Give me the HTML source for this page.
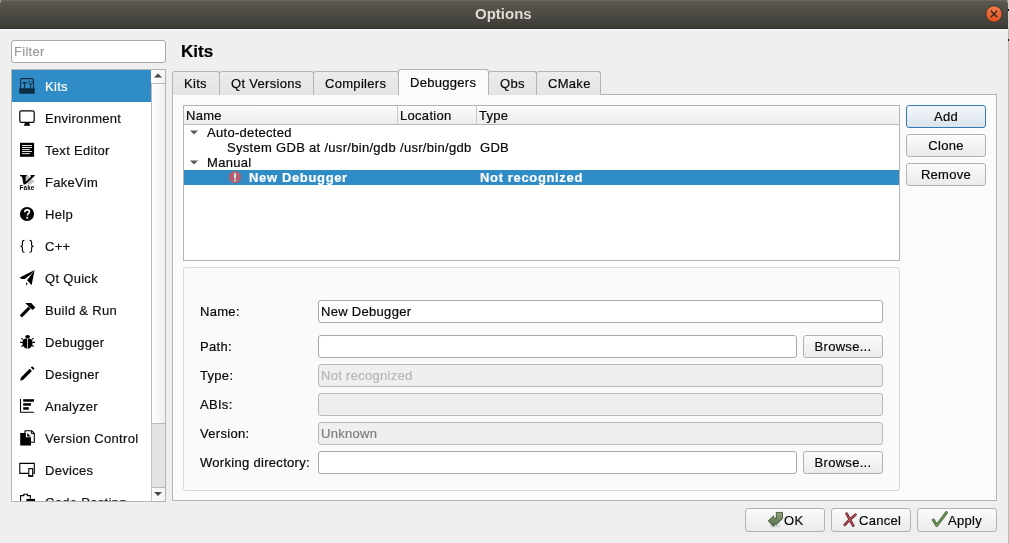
<!DOCTYPE html>
<html><head><meta charset="utf-8">
<style>
*{box-sizing:border-box}
html,body{margin:0;padding:0}
body{width:1009px;height:543px;position:relative;overflow:hidden;background:#efefef;font-family:"Liberation Sans",sans-serif;font-size:13px;color:#080808;letter-spacing:0.3px}
.a{position:absolute}
.t{position:absolute;will-change:transform;-webkit-text-stroke:0.2px currentColor;white-space:nowrap;line-height:15px;height:15px}
.btn{position:absolute;will-change:transform;-webkit-text-stroke:0.2px currentColor;border:1px solid #b2b2b2;border-radius:3px;background:linear-gradient(#fbfbfb,#ebebeb);text-align:center;line-height:20px;color:#080808}
.inp{position:absolute;border:1px solid #a9a9a9;border-radius:3px;background:#fff}
.dis{background:#efefef;border-color:#b9b9b9;color:#9a9a9a}
.tab{position:absolute;top:72px;height:23px;border:1px solid #b4b4b4;border-bottom:none;border-radius:3px 3px 0 0;background:linear-gradient(#ececec,#e4e4e4);line-height:22px;text-align:center}
.side{position:absolute;left:12px;width:139px;height:32px}
.side .ic{position:absolute;left:7px;top:8px;width:16px;height:16px}
.side .lb{position:absolute;left:33px;top:9px;line-height:15px;white-space:nowrap}
</style></head><body>

<!-- title bar -->
<div class="a" style="left:0;top:0;width:1008px;height:29px;background:linear-gradient(#5b5950,#3d3c37);border-radius:4px 4px 0 0;border-bottom:1px solid #2f2e2a"></div>
<div class="a" style="left:0;top:29px;width:1008px;height:1px;background:#fafafa"></div>
<div class="t" style="left:475px;top:6px;font-weight:bold;font-size:15px;color:#dfdbd2;letter-spacing:0;line-height:16px;-webkit-text-stroke:0">Options</div>
<!-- close button -->
<svg class="a" style="left:985px;top:5px" width="18" height="18" viewBox="0 0 18 18">
 <defs><linearGradient id="cg" x1="0" y1="0" x2="0" y2="1"><stop offset="0" stop-color="#f37a4c"/><stop offset="1" stop-color="#df5420"/></linearGradient></defs>
 <circle cx="9" cy="9" r="8.5" fill="#35332f"/>
 <circle cx="9" cy="9" r="7.7" fill="url(#cg)"/>
 <path d="M5.8 5.8 L12.2 12.2 M12.2 5.8 L5.8 12.2" stroke="#2b2520" stroke-width="1.3"/>
</svg>
<div class="a" style="left:1008px;top:0;width:1px;height:543px;background:#b9b9b9"></div>
<div class="a" style="left:1008px;top:0;width:1px;height:29px;background:#d2d2d2"></div>
<div class="a" style="left:1008px;top:9px;width:1px;height:2px;background:#111"></div>
<div class="a" style="left:1008px;top:39px;width:1px;height:2px;background:#111"></div>
<div class="a" style="left:0;top:0;width:1008px;height:1px;background:#6b695f;border-radius:4px 4px 0 0"></div>

<!-- filter -->
<div class="inp" style="left:11px;top:40px;width:155px;height:23px"></div>
<div class="t" style="left:14px;top:44px;color:#9b9b9b">Filter</div>

<!-- heading -->
<div class="t" style="left:181px;top:43px;font-weight:bold;font-size:17px;line-height:18px;height:18px;letter-spacing:0;color:#000">Kits</div>

<!-- sidebar list -->
<div class="a" style="left:11px;top:69px;width:155px;height:433px;border:1px solid #b4b4b4;background:#fff"></div>
<div class="a" style="left:0;top:0;width:1009px;height:501px;overflow:hidden">
<div class="a" style="left:12px;top:70px;width:139px;height:32px;background:#308cc6"></div>
<svg class="a" style="left:15px;top:74px" width="24" height="24" viewBox="0 0 24 24"><path d="M5.6 14.3V6.2Q5.6 4.6 7.2 4.6H16.9Q18.5 4.6 18.5 6.2V14.3" fill="none" stroke="#0e2c42" stroke-width="1.1"/>
<rect x="4.3" y="14.2" width="15.4" height="5.5" fill="#0e2c42"/>
<path d="M7 9.4L7.8 8H11.8V9.6Z" fill="#0e2c42"/><rect x="9.1" y="9.3" width="1.1" height="5" fill="#0e2c42"/>
<path d="M14 6.9V8.9Q14 10.5 15.55 10.5Q17.1 10.5 17.1 8.9V6.9" fill="none" stroke="#0e2c42" stroke-width="0.95"/><rect x="15" y="10.2" width="1.05" height="4.1" fill="#0e2c42"/></svg>
<div class="t" style="left:45px;top:79px;color:#fff">Kits</div>
<svg class="a" style="left:15px;top:106px" width="24" height="24" viewBox="0 0 24 24"><rect x="4.8" y="4.8" width="14.4" height="11.6" rx="1.6" fill="none" stroke="#000" stroke-width="1.2"/>
<path d="M10 17H14.1L15.3 19.7H8.8Z" fill="#000"/></svg>
<div class="t" style="left:45px;top:111px;color:#111">Environment</div>
<svg class="a" style="left:15px;top:138px" width="24" height="24" viewBox="0 0 24 24"><rect x="5" y="4.8" width="14.1" height="14" fill="#000"/>
<g fill="#fff"><rect x="6.9" y="7" width="10.1" height="0.9"/><rect x="6.9" y="9.1" width="10.1" height="0.9"/><rect x="6.9" y="11.2" width="8.1" height="0.9"/><rect x="6.9" y="13.1" width="10.1" height="0.9"/><rect x="6.9" y="15.2" width="8.1" height="0.9"/></g></svg>
<div class="t" style="left:45px;top:143px;color:#111">Text Editor</div>
<svg class="a" style="left:15px;top:170px" width="24" height="24" viewBox="0 0 24 24"><path d="M11.8 4.3L19.7 11.5L14.2 15.3L9.2 10.5Z" fill="#c2c2c2"/>
<path d="M5 5.1H11.6V6.3L10.6 6.6L10.7 11.8L16.2 6.6L15.6 6.2V5.1H19.7V6.1L19 6.5L10.3 14.6H8.6L6.9 6.6L5 6.3Z" fill="#000"/>
<text x="12" y="19.7" text-anchor="middle" font-family="Liberation Sans" font-weight="bold" font-size="6.4" letter-spacing="0.1" fill="#000">Fake</text></svg>
<div class="t" style="left:45px;top:175px;color:#111">FakeVim</div>
<svg class="a" style="left:15px;top:202px" width="24" height="24" viewBox="0 0 24 24"><circle cx="12" cy="12" r="7.1" fill="#000"/>
<path d="M9.8 10.2Q9.8 7.9 12.1 7.9Q14.4 7.9 14.4 9.9Q14.4 11.1 13 11.8Q12.4 12.2 12.4 13.4" fill="none" stroke="#fff" stroke-width="1.6"/>
<rect x="11.3" y="14.8" width="1.8" height="1.8" fill="#fff"/></svg>
<div class="t" style="left:45px;top:207px;color:#111">Help</div>
<svg class="a" style="left:15px;top:234px" width="24" height="24" viewBox="0 0 24 24"><path d="M9.4 6.4Q7.4 6.4 7.4 8.2V11Q7.4 12.3 5.6 12.4Q7.4 12.5 7.4 13.8V16.6Q7.4 18.4 9.4 18.4M14.6 6.4Q16.6 6.4 16.6 8.2V11Q16.6 12.3 18.4 12.4Q16.6 12.5 16.6 13.8V16.6Q16.6 18.4 14.6 18.4" fill="none" stroke="#000" stroke-width="1.1"/></svg>
<div class="t" style="left:45px;top:239px;color:#111">C++</div>
<svg class="a" style="left:15px;top:266px" width="24" height="24" viewBox="0 0 24 24"><path d="M4.8 11.6L19.6 4.1L15.6 8.6L9.8 12.9L6.4 12.9Z" fill="#000"/>
<path d="M19.6 4.1L12.1 14.3L16.6 19.3Z" fill="#000"/>
<path d="M10.9 16.2L12.7 17.7L11.3 19.6Z" fill="#000"/></svg>
<div class="t" style="left:45px;top:271px;color:#111">Qt Quick</div>
<svg class="a" style="left:15px;top:298px" width="24" height="24" viewBox="0 0 24 24"><path d="M4.8 17.3L13.5 8.6L15.6 10.7L6.9 19.4Z" fill="#000"/>
<path d="M10.2 5H16.2L20.4 9.4L17.6 12L15.4 9.9L13.3 8.1Z" fill="#000"/></svg>
<div class="t" style="left:45px;top:303px;color:#111">Build &amp; Run</div>
<svg class="a" style="left:15px;top:330px" width="24" height="24" viewBox="0 0 24 24"><path d="M12.2 8.3Q8.5 8.3 7.6 11Q7 13.5 7.9 15.8Q9.3 18.3 12.2 18.8Z M12.9 8.3Q16.5 8.3 17.4 11Q18 13.5 17.1 15.8Q15.7 18.3 12.9 18.8Z" fill="#000"/>
<ellipse cx="12.6" cy="6.6" rx="2.4" ry="1.6" fill="#000"/>
<path d="M6.3 8.1L8.3 9.6M5 12.4H7.5M6.3 16.6L8.3 15.2M18.7 8.1L16.7 9.6M20 12.4H17.5M18.7 16.6L16.7 15.2" stroke="#000" stroke-width="1.1"/></svg>
<div class="t" style="left:45px;top:335px;color:#111">Debugger</div>
<svg class="a" style="left:15px;top:362px" width="24" height="24" viewBox="0 0 24 24"><path d="M5 18.8L6 15.4L14.6 6.8L16.9 9.1L8.3 17.7Z" fill="#000"/>
<path d="M15.8 5.6L17.2 4.3L19.5 6.6L18.2 8Z" fill="#000"/></svg>
<div class="t" style="left:45px;top:367px;color:#111">Designer</div>
<svg class="a" style="left:15px;top:394px" width="24" height="24" viewBox="0 0 24 24"><path d="M5.5 5V18.3H19" fill="none" stroke="#000" stroke-width="1.1"/>
<rect x="8.2" y="5.2" width="10.8" height="2.5" fill="#000"/><rect x="8.2" y="9.2" width="7.8" height="2.5" fill="#000"/><rect x="8.2" y="13.2" width="5.6" height="2.5" fill="#000"/></svg>
<div class="t" style="left:45px;top:399px;color:#111">Analyzer</div>
<svg class="a" style="left:15px;top:426px" width="24" height="24" viewBox="0 0 24 24"><path d="M10 4.7H16.6L19.3 7.4V16.2H10Z" fill="#fff" stroke="#000" stroke-width="1.1" stroke-linejoin="round"/>
<path d="M16.4 4.8V7.6H19.2" fill="none" stroke="#000" stroke-width="1"/>
<path d="M5.2 7H10.7V11.2H16V19.6H5.2Z" fill="#000"/>
<path d="M12.2 7.1V10.4H15.8Z" fill="#000"/></svg>
<div class="t" style="left:45px;top:431px;color:#111">Version Control</div>
<svg class="a" style="left:15px;top:458px" width="24" height="24" viewBox="0 0 24 24"><path d="M13.3 15.4H4.8V5.4H19.3V15.4H18.2" fill="none" stroke="#000" stroke-width="1.1"/>
<rect x="13.8" y="10.6" width="3.9" height="7.4" fill="#fff" stroke="#000" stroke-width="1.1"/>
<rect x="13.3" y="17.3" width="4.9" height="1.4" fill="#000"/></svg>
<div class="t" style="left:45px;top:463px;color:#111">Devices</div>
<svg class="a" style="left:15px;top:490px" width="24" height="24" viewBox="0 0 24 24"><path d="M5.6 19V5.6H8.8V4.3H12.4V5.6H15.4V8.8" fill="none" stroke="#000" stroke-width="1.1"/><rect x="11.4" y="8.9" width="8.6" height="3" fill="#000"/></svg>
<div class="t" style="left:45px;top:495px;color:#111">Code Pasting</div>
</div>
<!-- scrollbar -->
<div class="a" style="left:151px;top:70px;width:14px;height:431px;background:#e3e3e3;border-left:1px solid #c4c4c4"></div>
<div class="a" style="left:151px;top:70px;width:14px;height:14px;background:linear-gradient(90deg,#fdfdfd,#f3f3f3);border-bottom:1px solid #b9b9b9"></div>
<svg class="a" style="left:151px;top:70px" width="14" height="14"><path d="M3 7.6H11L7 3.6Z" fill="#454545"/></svg>
<div class="a" style="left:151px;top:83px;width:14px;height:341px;background:linear-gradient(90deg,#fefefe,#f1f1f1);border:1px solid #b9b9b9;border-right:none"></div>
<div class="a" style="left:151px;top:487px;width:14px;height:14px;background:linear-gradient(90deg,#fdfdfd,#f3f3f3);border-top:1px solid #b9b9b9;border-left:1px solid #c4c4c4"></div>
<svg class="a" style="left:151px;top:487px" width="14" height="14"><path d="M3 5H11L7 9Z" fill="#454545"/></svg>



<!-- tab pane -->
<div class="a" style="left:172px;top:94px;width:825px;height:407px;border:1px solid #b4b4b4;background:#fbfbfb"></div>
<div class="tab" style="left:172px;top:71px;width:48px;height:24px"></div>
<div class="tab" style="left:219px;top:71px;width:95px;height:24px"></div>
<div class="tab" style="left:313px;top:71px;width:86px;height:24px"></div>
<div class="tab" style="left:488px;top:71px;width:49px;height:24px"></div>
<div class="tab" style="left:536px;top:71px;width:65px;height:24px"></div>
<div class="a" style="left:398px;top:69px;width:91px;height:26px;border:1px solid #b4b4b4;border-bottom:none;border-radius:3px 3px 0 0;background:#fbfbfb"></div>
<div class="t" style="left:184px;top:76px">Kits</div>
<div class="t" style="left:231px;top:76px">Qt Versions</div>
<div class="t" style="left:325px;top:76px">Compilers</div>
<div class="t" style="left:410px;top:75px">Debuggers</div>
<div class="t" style="left:500px;top:76px">Qbs</div>
<div class="t" style="left:548px;top:76px">CMake</div>

<!-- tree -->
<div class="a" style="left:183px;top:105px;width:717px;height:156px;border:1px solid #b4b4b4;background:#fff"></div>
<div class="a" style="left:184px;top:106px;width:715px;height:19px;background:linear-gradient(#fcfcfc,#ececec);border-bottom:1px solid #b9b9b9"></div>
<div class="a" style="left:397px;top:106px;width:1px;height:18px;background:#c8c8c8"></div>
<div class="a" style="left:476px;top:106px;width:1px;height:18px;background:#c8c8c8"></div>
<div class="t" style="left:186px;top:108px">Name</div>
<div class="t" style="left:400px;top:108px">Location</div>
<div class="t" style="left:479px;top:108px">Type</div>
<svg class="a" style="left:189px;top:129px" width="10" height="6"><path d="M1 1.5H9L5 5.5Z" fill="#5a5a5a"/></svg>
<div class="t" style="left:207px;top:125px">Auto-detected</div>
<div class="t" style="left:227px;top:140px">System GDB at /usr/bin/gdb</div>
<div class="t" style="left:400px;top:140px">/usr/bin/gdb</div>
<div class="t" style="left:480px;top:140px">GDB</div>
<svg class="a" style="left:189px;top:159px" width="10" height="6"><path d="M1 1.5H9L5 5.5Z" fill="#5a5a5a"/></svg>
<div class="t" style="left:207px;top:155px">Manual</div>
<div class="a" style="left:184px;top:170px;width:715px;height:15px;background:#308cc6"></div>
<svg class="a" style="left:228px;top:170px" width="14" height="14" viewBox="0 0 14 14"><path d="M4.5 1.2H9.5L13 4.7V9.5L9.5 13H4.5L1 9.5V4.7Z" fill="#b5606e"/><rect x="6.1" y="3.2" width="1.9" height="5.3" fill="#d4eef8"/><rect x="6.1" y="9.5" width="1.9" height="1.7" fill="#d4eef8"/></svg>
<div class="t" style="left:249px;top:170px;font-weight:bold;color:#fff;letter-spacing:0.65px">New Debugger</div>
<div class="t" style="left:480px;top:170px;font-weight:bold;color:#fff;letter-spacing:0.65px">Not recognized</div>

<!-- side buttons -->
<div class="btn" style="left:906px;top:105px;width:80px;height:23px;line-height:21px;border-color:#3479b0;background:linear-gradient(#f4f7fa,#dbe4ec)">Add</div>
<div class="btn" style="left:906px;top:134px;width:80px;height:23px;line-height:21px">Clone</div>
<div class="btn" style="left:906px;top:163px;width:80px;height:23px;line-height:21px">Remove</div>

<!-- group box -->
<div class="a" style="left:183px;top:267px;width:717px;height:224px;border:1px solid #d8d8d8;border-radius:3px;background:#fafafa"></div>
<div class="t" style="left:200px;top:304px">Name:</div>
<div class="t" style="left:200px;top:339px">Path:</div>
<div class="t" style="left:200px;top:368px">Type:</div>
<div class="t" style="left:200px;top:397px">ABIs:</div>
<div class="t" style="left:200px;top:426px">Version:</div>
<div class="t" style="left:200px;top:455px">Working directory:</div>
<div class="inp" style="left:318px;top:300px;width:565px;height:23px"></div>
<div class="t" style="left:321px;top:304px">New Debugger</div>
<div class="inp" style="left:318px;top:335px;width:479px;height:23px"></div>
<div class="btn" style="left:803px;top:335px;width:80px;height:23px;line-height:21px">Browse...</div>
<div class="inp dis" style="left:318px;top:364px;width:565px;height:23px"></div>
<div class="t" style="left:321px;top:368px;color:#b6b6b6">Not recognized</div>
<div class="inp dis" style="left:318px;top:393px;width:565px;height:23px"></div>
<div class="inp dis" style="left:318px;top:422px;width:565px;height:23px"></div>
<div class="t" style="left:321px;top:426px;color:#7c7c7c">Unknown</div>
<div class="inp" style="left:318px;top:451px;width:479px;height:23px"></div>
<div class="btn" style="left:803px;top:451px;width:80px;height:23px;line-height:21px">Browse...</div>

<!-- bottom buttons -->
<div class="btn" style="left:745px;top:508px;width:80px;height:24px"></div>
<div class="btn" style="left:831px;top:508px;width:80px;height:24px"></div>
<div class="btn" style="left:917px;top:508px;width:80px;height:24px"></div>
<svg class="a" style="left:764px;top:508px" width="24" height="24" viewBox="0 0 24 24">
 <defs><linearGradient id="gok" x1="0" y1="0" x2="0" y2="1"><stop offset="0" stop-color="#8fa47e"/><stop offset="1" stop-color="#546c43"/></linearGradient></defs>
 <ellipse cx="11" cy="18" rx="5.5" ry="1.2" fill="#000" opacity="0.12"/>
 <path d="M12.3 4.4H18.5V10.6L12.9 16.3H9.8L9.6 18.4L4.2 12.8L9.6 7.9L10.1 10.4H12.3Z" fill="url(#gok)" stroke="#34402b" stroke-width="0.8" stroke-linejoin="round"/>
</svg>
<div class="t" style="left:784px;top:513px">OK</div>
<svg class="a" style="left:838px;top:508px" width="24" height="24" viewBox="0 0 24 24">
 <path d="M8.6 5.6Q11.5 11 15.2 17.6M17.4 6.7Q11 11.8 6.7 16.8" fill="none" stroke="#4e1a1f" stroke-width="2.7" stroke-linecap="round"/>
 <path d="M8.6 5.6Q11.5 11 15.2 17.6M17.4 6.7Q11 11.8 6.7 16.8" fill="none" stroke="#b44a57" stroke-width="1.6" stroke-linecap="round"/>
</svg>
<div class="t" style="left:859px;top:513px">Cancel</div>
<svg class="a" style="left:928px;top:508px" width="24" height="24" viewBox="0 0 24 24">
 <path d="M5.3 12L8.8 17.5L18.4 4.6" fill="none" stroke="#3f5a32" stroke-width="2.9" stroke-linecap="round" stroke-linejoin="round"/>
 <path d="M5.3 12L8.8 17.5L18.4 4.6" fill="none" stroke="#6a9352" stroke-width="1.6" stroke-linecap="round" stroke-linejoin="round"/>
</svg>
<div class="t" style="left:948px;top:513px">Apply</div>

</body></html>
